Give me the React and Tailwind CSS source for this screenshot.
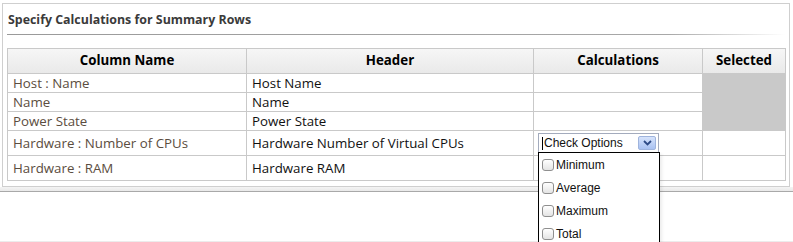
import React from 'react';

const rows = [
  { name: 'Host : Name', header: 'Host Name', h: 'h-[19px]' },
  { name: 'Name', header: 'Name', h: 'h-[19px]' },
  { name: 'Power State', header: 'Power State', h: 'h-[19px]' },
  { name: 'Hardware : Number of CPUs', header: 'Hardware Number of Virtual CPUs', h: 'h-[25px]' },
  { name: 'Hardware : RAM', header: 'Hardware RAM', h: 'h-[25px]' },
];

const options = ['Minimum', 'Average', 'Maximum', 'Total'];

function Checkbox() {
  return (
    <span className="block w-[12px] h-[12px] rounded-[3px] border border-[#8f8f8f] bg-gradient-to-b from-white to-[#e4e4e4] shrink-0" />
  );
}

export default function App() {
  return (
    <div className="relative w-[793px] h-[242px] overflow-hidden bg-white font-['Open_Sans',sans-serif]">
      {/* Panel */}
      <div className="ml-[2px] mt-[3px] w-[788px] border border-[#cfcfcf] bg-white pb-[5px]">
        <div className="mx-[4px] h-[30px] flex items-center pt-[2px] relative">
          <h3 className="text-[12.4px] font-bold text-[#3a3a3a] m-0 pl-[1px]">Specify Calculations for Summary Rows</h3>
          <div className="absolute left-0 right-0 bottom-[-1px] h-[1px] bg-gradient-to-r from-[#9a9a9a] via-[#a8a8a8] via-85% to-transparent" />
        </div>

        <table className="ml-[4px] mt-[14px] w-[778px] border-collapse table-fixed text-[13.3px]">
          <colgroup>
            <col className="w-[239px]" />
            <col className="w-[287px]" />
            <col className="w-[169px]" />
            <col className="w-[83px]" />
          </colgroup>
          <thead>
            <tr className="h-[25px] bg-gradient-to-b from-[#f6f6f6] to-[#e9e9e9]">
              <th className="border border-[#c9c9c9] font-bold text-black text-center p-0">Column Name</th>
              <th className="border border-[#c9c9c9] font-bold text-black text-center p-0">Header</th>
              <th className="border border-[#c9c9c9] font-bold text-black text-center p-0">Calculations</th>
              <th className="border border-[#c9c9c9] font-bold text-black text-center p-0">Selected</th>
            </tr>
          </thead>
          <tbody>
            {rows.map((r, i) => (
              <tr key={r.name} className={r.h}>
                <td className="border border-[#c9c9c9] text-[#5b4d40] pl-[5px] py-0 leading-[17px]">{r.name}</td>
                <td className="border border-[#c9c9c9] text-[#111] pl-[5px] py-0 leading-[17px]">{r.header}</td>
                <td className="border border-[#c9c9c9] p-0" />
                {i === 0 && <td rowSpan={3} className="border border-[#c9c9c9] bg-[#c9c9c9] p-0" />}
                {i > 2 && <td className="border border-[#c9c9c9] p-0" />}
              </tr>
            ))}
          </tbody>
        </table>
      </div>
      {/* panel bottom shadow */}
      <div className="h-[5px] bg-gradient-to-b from-[#f4f4f4] to-[#e9e9e9] border-b border-[#a9a9a9]" />
      <div className="absolute left-0 right-0 bottom-0 h-[1px] bg-[#ececec]" />

      {/* Check options select */}
      <div className="absolute left-[538px] top-[133px] w-[121px] h-[20px] border border-[#a3abbd] bg-white flex items-center font-['Liberation_Sans',Arial,sans-serif] text-[12px] text-[#111]">
        <span className="ml-[3px] w-[1px] h-[13px] bg-black" />
        <span className="ml-[1px] leading-none">Check Options</span>
        <span className="ml-auto mr-[2px] w-[18px] h-[14px] rounded-[2px] bg-gradient-to-b from-[#d6e3fb] to-[#a9c2f2] border border-[#9fb4dd] flex items-center justify-center">
          <svg width="9" height="6" viewBox="0 0 9 6">
            <path d="M1 1 L4.5 4.5 L8 1" fill="none" stroke="#2d4a86" strokeWidth="1.8" />
          </svg>
        </span>
      </div>
      <div className="absolute left-[538px] top-[152px] w-[122px] h-[100px] border border-black bg-white font-['Liberation_Sans',Arial,sans-serif] text-[12px] text-[#111] shadow-[2px_2px_3px_rgba(0,0,0,0.08)]">
        {options.map((o) => (
          <div key={o} className="h-[23px] flex items-center pl-[3px] gap-[2px]">
            <Checkbox />
            <span className="leading-none">{o}</span>
          </div>
        ))}
      </div>
    </div>
  );
}
